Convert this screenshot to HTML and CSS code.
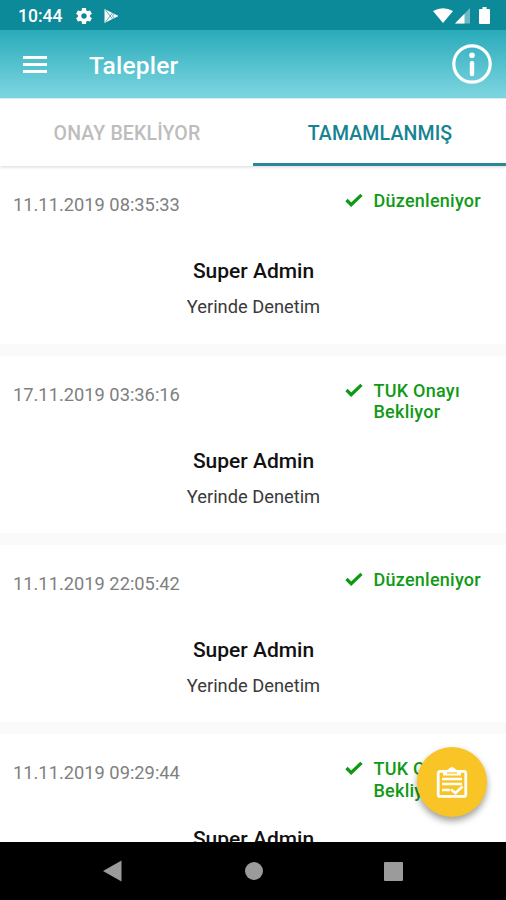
FILE: index.html
```
<!DOCTYPE html>
<html lang="tr">
<head>
    <meta charset="UTF-8">
    <meta name="viewport" content="width=device-width, initial-scale=1.0">
    <title>Talepler</title>
    <link rel="stylesheet" href="styles.css">
</head>
<body>
    <div class="screen">
        <div class="status-bar">
            <span class="clock">10:44</span>
            <svg class="gear" width="16" height="16" viewBox="2 2 20 20" fill="#fff"><path d="M19.43 12.98c.04-.32.07-.64.07-.98s-.03-.66-.07-.98l2.11-1.65c.19-.15.24-.42.12-.64l-2-3.46c-.12-.22-.39-.3-.61-.22l-2.49 1c-.52-.4-1.08-.73-1.69-.98l-.38-2.65C14.46 2.18 14.25 2 14 2h-4c-.25 0-.46.18-.49.42l-.38 2.65c-.61.25-1.17.59-1.69.98l-2.49-1c-.23-.09-.49 0-.61.22l-2 3.46c-.13.22-.07.49.12.64l2.11 1.65c-.04.32-.07.65-.07.98s.03.66.07.98l-2.11 1.65c-.19.15-.24.42-.12.64l2 3.46c.12.22.39.3.61.22l2.49-1c.52.4 1.08.73 1.69.98l.38 2.65c.03.24.24.42.49.42h4c.25 0 .46-.18.49-.42l.38-2.65c.61-.25 1.17-.59 1.69-.98l2.49 1c.23.09.49 0 .61-.22l2-3.46c.12-.22.07-.49-.12-.64l-2.11-1.65zM12 15.5c-1.93 0-3.5-1.57-3.5-3.5s1.57-3.5 3.5-3.5 3.5 1.57 3.5 3.5-1.57 3.5-3.5 3.5z"/></svg>
            <svg class="play" width="15" height="16" viewBox="0 0 15 16"><path d="M.5 1v14L14.5 8z" fill="#fff"/><path d="M1.5 2l7 9M1.5 14l7-9M8.5 8l2-2.5M8.5 8l2 2.5" stroke="#2694a2" stroke-width=".8" fill="none"/></svg>
            <div class="signals">
                <svg width="20" height="16" viewBox="0 0 20 16" fill="#fff"><path d="M0 3Q10-2.5 20 3L10 15z"/></svg>
                <svg width="16" height="16" viewBox="0 0 16 16"><path d="M0 15.5L15 0v15.5z" fill="#6db9c2"/><path d="M0 15.5L9.5 5.7v9.8z" fill="#fff"/></svg>
                <svg width="11" height="17" viewBox="0 0 11 17" fill="#fff"><path d="M3.5 0h4v2H10q1 0 1 1v13q0 1-1 1H1q-1 0-1-1V3q0-1 1-1h2.5z"/></svg>
            </div>
        </div>
        <header class="app-bar">
            <div class="menu-btn"><span></span><span></span><span></span></div>
            <h1>Talepler</h1>
            <svg class="info" width="42" height="42" viewBox="0 0 42 42"><circle cx="21" cy="21" r="18.2" fill="none" stroke="#fff" stroke-width="3.2"/><circle cx="21" cy="12.3" r="2.8" fill="#fff"/><path d="M21 20v11" stroke="#fff" stroke-width="4.4" stroke-linecap="round"/></svg>
        </header>
        <nav class="tabs">
            <div class="tab"><span>ONAY BEKLİYOR</span></div>
            <div class="tab active"><span>TAMAMLANMIŞ</span></div>
        </nav>
        <main class="list">
            <div class="card">
                <div class="card-top">
                    <span class="date">11.11.2019 08:35:33</span>
                    <svg class="check" width="18" height="14" viewBox="0 0 18 14"><path d="M1.5 7l4.7 4.7L16.5 1.8"/></svg>
                    <span class="state">Düzenleniyor</span>
                </div>
                <div class="name">Super Admin</div>
                <div class="kind">Yerinde Denetim</div>
            </div>
            <div class="card">
                <div class="card-top">
                    <span class="date">17.11.2019 03:36:16</span>
                    <svg class="check" width="18" height="14" viewBox="0 0 18 14"><path d="M1.5 7l4.7 4.7L16.5 1.8"/></svg>
                    <span class="state">TUK Onayı<br>Bekliyor</span>
                </div>
                <div class="name">Super Admin</div>
                <div class="kind">Yerinde Denetim</div>
            </div>
            <div class="card">
                <div class="card-top">
                    <span class="date">11.11.2019 22:05:42</span>
                    <svg class="check" width="18" height="14" viewBox="0 0 18 14"><path d="M1.5 7l4.7 4.7L16.5 1.8"/></svg>
                    <span class="state">Düzenleniyor</span>
                </div>
                <div class="name">Super Admin</div>
                <div class="kind">Yerinde Denetim</div>
            </div>
            <div class="card">
                <div class="card-top">
                    <span class="date">11.11.2019 09:29:44</span>
                    <svg class="check" width="18" height="14" viewBox="0 0 18 14"><path d="M1.5 7l4.7 4.7L16.5 1.8"/></svg>
                    <span class="state">TUK Onayı<br>Bekliyor</span>
                </div>
                <div class="name">Super Admin</div>
            </div>
        </main>
        <div class="fab">
            <svg width="32" height="32" viewBox="0 0 32 32" fill="none" stroke="#fff" stroke-width="2.8"><rect x="2.2" y="5.4" width="27.6" height="25" rx="2"/><path d="M7 9.500V5.500l5-2q4-5 8 0l5 2v4z" fill="#fff" stroke="none"/><path d="M11 7h10" stroke="#f8c426" stroke-width="1.2"/><path d="M6 13h20M6 18h20M6 24h8" stroke-width="2.4"/><path d="M15 23.500l4.500 3.500 7-6.500" stroke-width="2.6"/></svg>
        </div>
        <footer class="nav-bar">
            <svg width="20" height="22" viewBox="0 0 20 22" fill="#9b9b9b"><path d="M0 11L18.5 .5v21z"/></svg>
            <div class="home"></div>
            <div class="recent"></div>
        </footer>
    </div>
</body>
</html>
```
FILE: styles.css
```
* {
    margin: 0;
    padding: 0;
    box-sizing: border-box;
}

body {
    font-family: Roboto, sans-serif;
    background: #fff;
}

.screen {
    position: relative;
    width: 506px;
    height: 900px;
    display: flex;
    flex-direction: column;
    overflow: hidden;
}

.status-bar {
    height: 30px;
    flex: none;
    display: flex;
    align-items: center;
    padding: 1px 16px 0 18px;
    background: #0d8a99;
    color: #fff;
}

.clock {
    width: 58px;
    font-size: 17.5px;
    font-weight: 500;
}

.play {
    margin-left: 12px;
}

.signals {
    display: flex;
    align-items: center;
    margin-left: auto;
}

.signals svg:nth-child(2) {
    margin: 0 8px 0 2px;
}

.app-bar {
    height: 68px;
    flex: none;
    display: flex;
    align-items: center;
    padding: 0 13px 0 23px;
    background: linear-gradient(#29abba, #7ed6e1);
    color: #fff;
}

.menu-btn {
    width: 24px;
    display: flex;
    flex-direction: column;
    gap: 4px;
}

.menu-btn span {
    height: 3px;
    background: #fff;
}

h1 {
    margin: 3px 0 0 42px;
    font-size: 24.5px;
    font-weight: 500;
    letter-spacing: 0.2px;
}

.info {
    margin-left: auto;
}

/* Tabs */
.tabs {
    height: 68px;
    flex: none;
    display: flex;
    background: #fff;
    border-top: 1px solid #d3eff2;
    box-shadow: 0 1px 3px rgba(0, 0, 0, 0.16);
    position: relative;
    z-index: 1;
}

.tab {
    flex: 1;
    display: flex;
    align-items: center;
    justify-content: center;
    padding: 4px 0 0 1px;
    border-bottom: 3px solid transparent;
    font-size: 19.5px;
    font-weight: 500;
    letter-spacing: 0.15px;
    color: #bdbdbd;
}

.tab.active {
    color: #168392;
    border-color: #2b8997;
}

/* Request cards */
.list {
    flex: 1;
    min-height: 0;
    overflow: hidden;
    background: #fafafa;
    display: flex;
    flex-direction: column;
    gap: 12px;
}

.card {
    height: 177.3px;
    flex: none;
    padding: 24px 13px 0 13px;
    background: #fff;
}

.card:first-child {
    height: 177.6px;
}

.card-top {
    height: 68px;
    display: flex;
    align-items: flex-start;
}

.date {
    width: 332px;
    padding-top: 4px;
    font-size: 18.3px;
    line-height: 22px;
    color: #808080;
}

.check {
    margin: 3px 10.5px 0 0;
    fill: none;
    stroke: #0d9a12;
    stroke-width: 3.2;
}

.state {
    font-size: 18px;
    line-height: 21.5px;
    font-weight: 500;
    letter-spacing: 0.25px;
    color: #119a16;
}

.name {
    padding-left: 1px;
    text-align: center;
    font-size: 21px;
    line-height: 26px;
    font-weight: 500;
    color: #111;
}

.kind {
    margin-top: 12px;
    padding-left: 1px;
    text-align: center;
    font-size: 18.3px;
    line-height: 22.4px;
    color: #3a3a3a;
}

.fab {
    position: absolute;
    left: 416.5px;
    top: 747px;
    width: 70px;
    height: 70px;
    display: flex;
    align-items: center;
    justify-content: center;
    border-radius: 50%;
    background: #f8c426;
    box-shadow: 0 4px 7px rgba(0, 0, 0, 0.38);
    z-index: 2;
}

/* Android navigation */
.nav-bar {
    height: 58px;
    flex: none;
    display: flex;
    align-items: center;
    justify-content: space-between;
    padding: 0 103px;
    background: #000;
}

.home {
    width: 18px;
    height: 18px;
    border-radius: 50%;
    background: #9b9b9b;
}

.recent {
    width: 19px;
    height: 19px;
    border-radius: 1px;
    background: #9b9b9b;
}
```
